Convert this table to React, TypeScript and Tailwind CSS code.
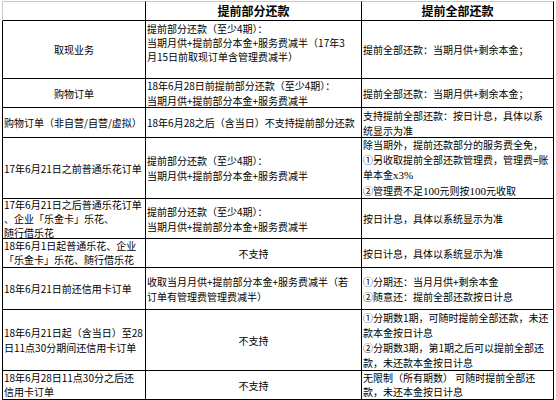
import React from 'react';

type CellProps = {
  lines: React.ReactNode[];
  center?: boolean;
  top?: boolean;
  tight?: boolean;
  first?: boolean;
};

const serif = (t: string) => <span className="font-['Liberation_Serif',serif] text-[11px]">{t}</span>;

const Cell: React.FC<CellProps> = ({ lines, center, top, tight, first }) => (
  <div
    className={`flex flex-col overflow-hidden border-b border-r border-black px-[1px] whitespace-nowrap ${
      first ? 'border-l' : ''
    } ${top ? 'justify-start pt-[1px] leading-[14px]' : tight ? 'justify-center leading-[14px]' : 'justify-center leading-[15px]'} ${
      center ? 'items-center' : 'items-start'
    }`}
  >
    {lines.map((l, i) => (
      <div key={i}>{l}</div>
    ))}
  </div>
);

const rows: CellProps[][] = [
  [
    { lines: ['取现业务'], center: true },
    {
      lines: ['提前部分还款（至少4期）：', '当期月供+提前部分本金+服务费减半（17年3', '月15日前取现订单含管理费减半）'],
      top: true,
    },
    { lines: ['提前全部还款：当期月供+剩余本金；'] },
  ],
  [
    { lines: ['购物订单'], center: true },
    { lines: ['18年6月28日前提前部分还款（至少4期）：', '当期月供+提前部分本金+服务费减半'] },
    { lines: ['提前全部还款：当期月供+剩余本金；'] },
  ],
  [
    { lines: ['购物订单（非自营/自营/虚拟）'] },
    { lines: ['18年6月28之后（含当日）不支持提前部分还款'] },
    { lines: ['支持提前全部还款：按日计息，具体以系', '统显示为准'] },
  ],
  [
    { lines: ['17年6月21日之前普通乐花订单'] },
    { lines: ['提前部分还款（至少4期）：', '当期月供+提前部分本金+服务费减半'] },
    {
      lines: [
        '除当期外，提前还款部分的服务费全免，',
        '①另收取提前全部还款管理费，管理费=账',
        <>单本金{serif('x3%')}</>,
        <>②管理费不足{serif('100')}元则按{serif('100')}元收取</>,
      ],
    },
  ],
  [
    { lines: ['17年6月21日之后普通乐花订单', '、企业「乐金卡」乐花、', '随行借乐花'], tight: true },
    { lines: ['提前部分还款（至少4期）：', '当期月供+提前部分本金+服务费减半'] },
    { lines: ['按日计息，具体以系统显示为准'] },
  ],
  [
    { lines: ['18年6月1日起普通乐花、企业', '「乐金卡」乐花、随行借乐花'], tight: true },
    { lines: ['不支持'], center: true },
    { lines: ['按日计息，具体以系统显示为准'] },
  ],
  [
    { lines: ['18年6月21日前还信用卡订单'] },
    { lines: ['收取当月月供+提前部分本金+服务费减半（若', '订单有管理费管理费减半）'] },
    { lines: ['①分期还：当月月供+剩余本金', '②随意还：提前全部还款按日计息'] },
  ],
  [
    { lines: ['18年6月21日起（含当日）至28', '日11点30分期间还信用卡订单'] },
    { lines: ['不支持'], center: true },
    {
      lines: [
        '①分期数1期，可随时提前全部还款，未还',
        '款本金按日计息',
        '②分期数3期，第1期之后可以提前全部还',
        '款，未还款本金按日计息',
      ],
    },
  ],
  [
    { lines: ['18年6月28日11点30分之后还', '信用卡订单'], tight: true },
    { lines: ['不支持'], center: true },
    { lines: ['无限制（所有期数） 可随时提前全部还', '款，未还本金按日计息'], tight: true },
  ],
];

export default function App() {
  return (
    <div className="h-[400px] w-[556px] overflow-hidden bg-white pl-[2px] pt-[1px] font-['Noto_Sans_CJK_SC','Noto_Sans',sans-serif] text-[10px] text-black">
      <div className="grid w-[552px] grid-cols-[144px_216px_192px] grid-rows-[20px_58px_29px_30px_61px_40px_29px_42px_61px_29px]">
        {/* header */}
        <div className="border-b border-l border-r border-t border-b-black border-l-[#c8c8c8] border-r-black border-t-[#c8c8c8]" />
        <div className="flex items-center justify-center border-b border-r border-t border-b-black border-r-black border-t-[#c8c8c8] text-[12px] font-bold">
          提前部分还款
        </div>
        <div className="flex items-center justify-center border-b border-r border-t border-b-black border-r-black border-t-[#c8c8c8] text-[12px] font-bold">
          提前全部还款
        </div>
        {rows.map((r, i) => (
          <React.Fragment key={i}>
            {r.map((c, j) => (
              <Cell key={j} {...c} first={j === 0} />
            ))}
          </React.Fragment>
        ))}
      </div>
    </div>
  );
}
